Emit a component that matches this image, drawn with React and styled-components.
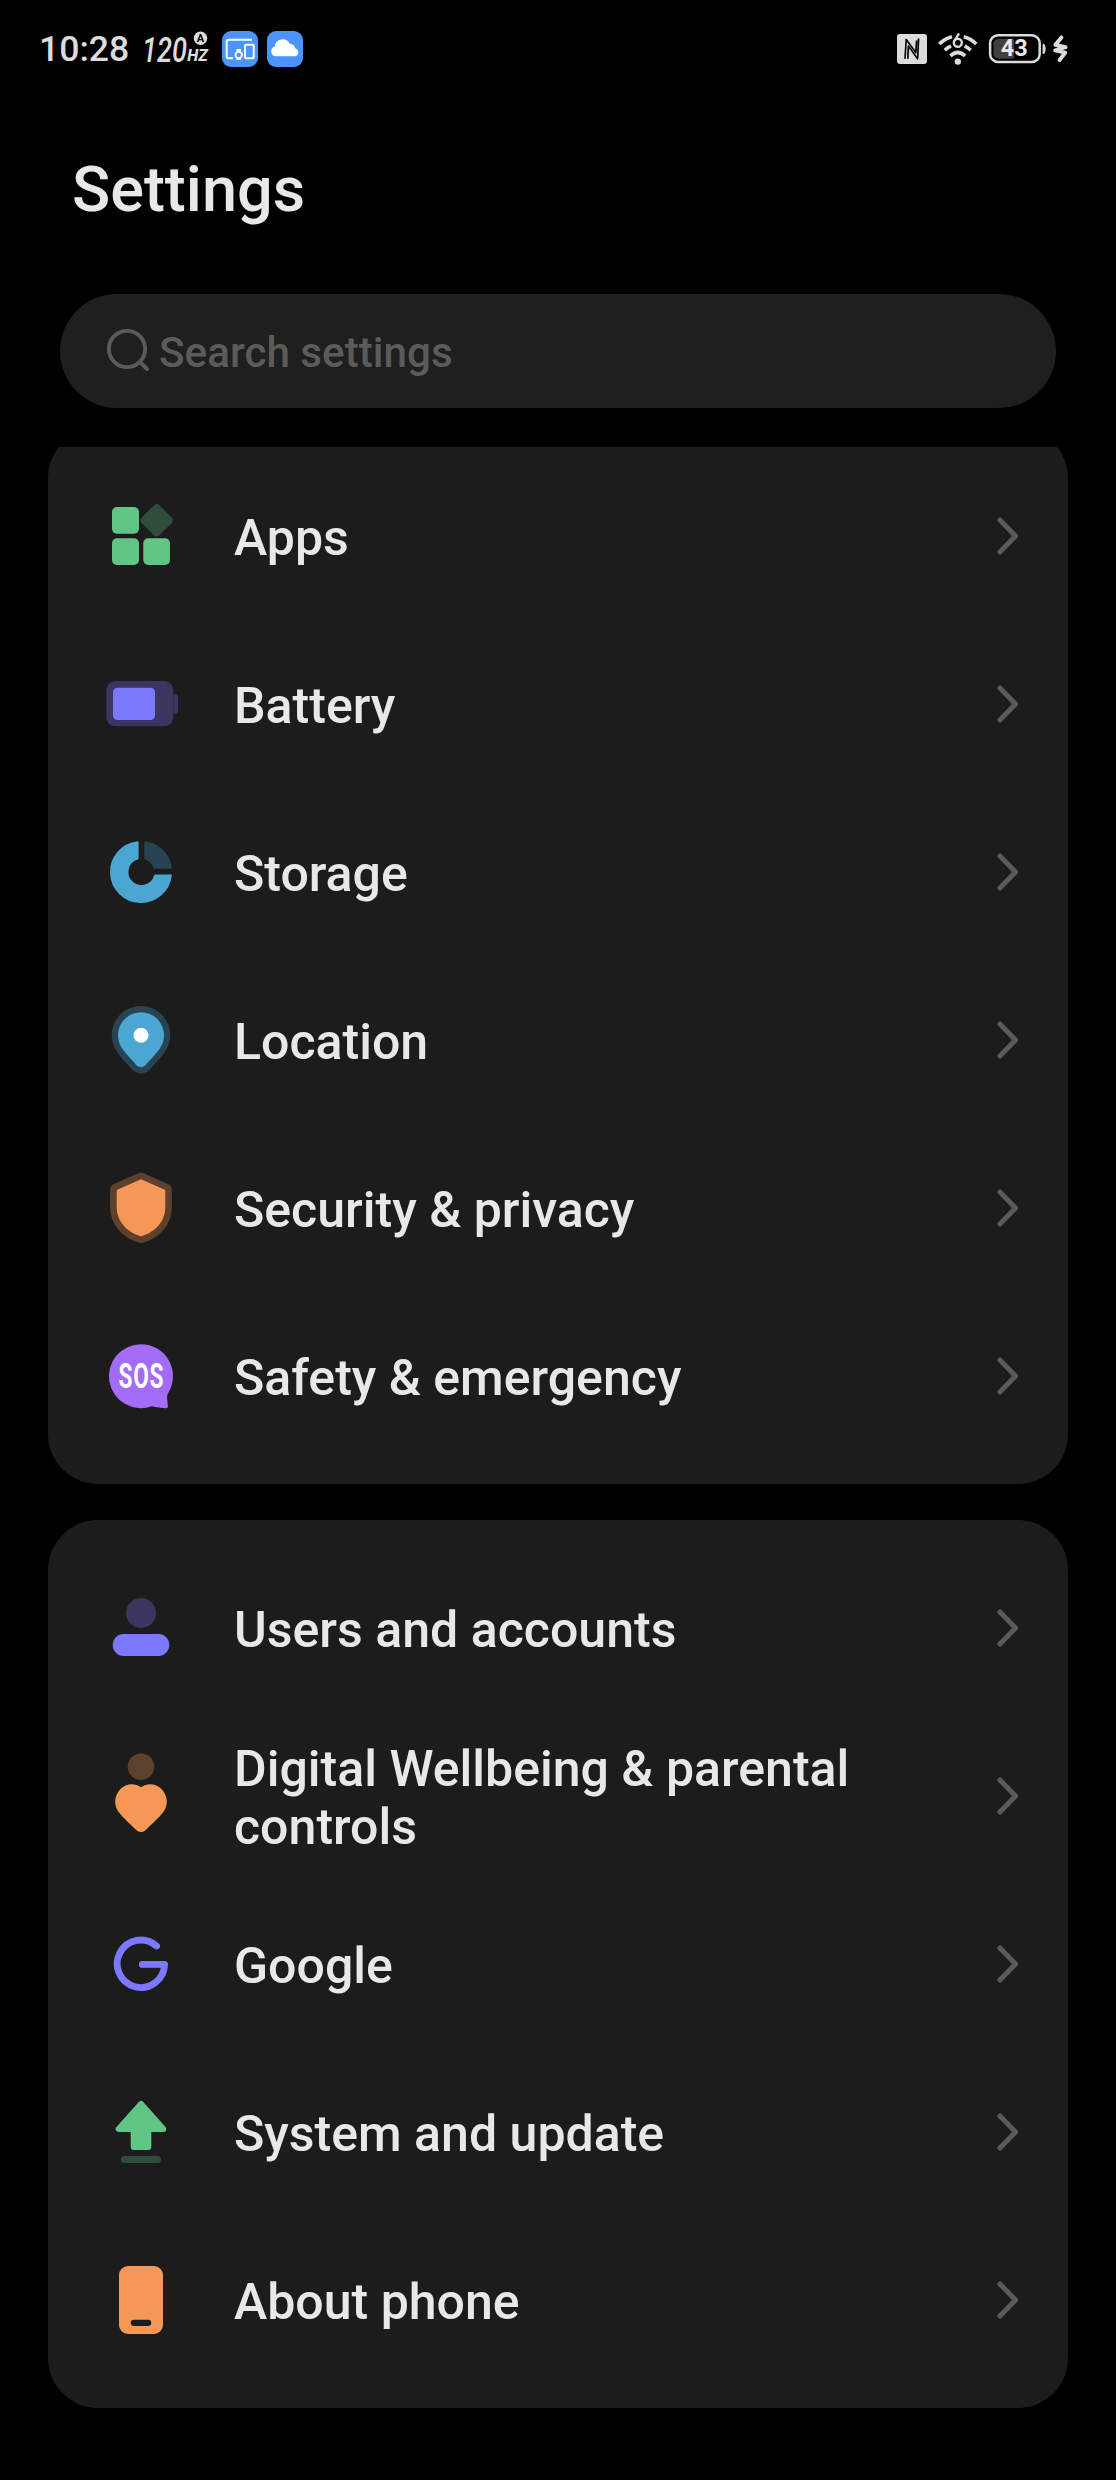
import React from "react";
import styled, { createGlobalStyle } from "styled-components";

const GlobalStyle = createGlobalStyle`
  * {
    box-sizing: border-box;
  }
  body {
    margin: 0;
    background: #000;
    font-family: Roboto, "Liberation Sans", sans-serif;
  }
`;

const Screen = styled.div`
  display: flex;
  flex-direction: column;
  width: 1116px;
  height: 2480px;
  background: #000;
  color: #e8e8e8;
  overflow: hidden;
`;

const StatusBar = styled.header`
  display: flex;
  align-items: center;
  justify-content: space-between;
  height: 98px;
  padding: 0 48px 0 39px;
`;

const StatusGroup = styled.div`
  display: flex;
  align-items: center;
  gap: ${({ $gap }) => $gap}px;
`;

const Clock = styled.span`
  width: 91px;
  margin-right: 5px;
  font-size: 35.6px;
  line-height: 41px;
  font-weight: 500;
  color: #dcdcdc;
  white-space: nowrap;
`;

const StatusSvg = styled.svg`
  display: block;
  flex: none;
  overflow: visible;
`;

const ChargingGroup = styled.div`
  display: flex;
  align-items: center;
  gap: 7px;
`;

const Title = styled.h1`
  margin: 0;
  padding: 55px 72px 0;
  height: 196px;
  font-size: 63px;
  line-height: 74px;
  font-weight: 500;
`;

const SearchBar = styled.div`
  display: flex;
  align-items: center;
  flex: none;
  height: 114px;
  margin: 0 60px;
  padding-left: 44px;
  border-radius: 57px;
  background: #1f1f1f;
  color: #5b5b5b;
`;

const SearchText = styled.span`
  padding: 2px 0 0 8px;
  font-size: 42.2px;
  font-weight: 500;
`;

/* the list is scrolled a little under the search bar */
const ListViewport = styled.main`
  flex: 1;
  min-height: 0;
  margin-top: 39px;
  padding: 0 48px;
  overflow: hidden;
`;

const List = styled.div`
  display: flex;
  flex-direction: column;
  gap: 36px;
  margin-top: -19px;
`;

const Card = styled.section`
  padding: 24px 48px 24px 57px;
  border-radius: 50px;
  background: #1c1c1c;
`;

const Row = styled.div`
  display: flex;
  align-items: center;
  height: 168px;
`;

const RowIcon = styled.svg`
  flex: none;
  width: 72px;
  height: 72px;
  overflow: visible;
`;

const Label = styled.span`
  flex: 1;
  padding: 4px 100px 0 57px;
  font-size: 50.05px;
  line-height: 58px;
  font-weight: 500;
`;

const Chevron = styled.svg`
  flex: none;
  width: 24px;
  height: 40px;
`;

const colors = {
  green: "#61c685",
  greenDim: "#2f4d3a",
  purple: "#7c78ff",
  purpleDim: "#39365f",
  blue: "#4ba6d2",
  blueDim: "#284452",
  orange: "#f59857",
  orangeDim: "#5c412d",
  violet: "#a46bf7",
};

const AppsIcon = () => (
  <RowIcon viewBox="0 0 72 72">
    <g fill={colors.green}>
      <rect x="7" y="7" width="27" height="26.7" rx="5" />
      <rect x="7" y="38.3" width="27" height="26.7" rx="5" />
      <rect x="38.3" y="38.3" width="26.7" height="26.7" rx="5" />
    </g>
    <rect
      x="39.2"
      y="7.8"
      width="25"
      height="25"
      rx="4"
      fill={colors.greenDim}
      transform="rotate(45 51.7 20.3)"
    />
  </RowIcon>
);

const BatteryIcon = () => (
  <RowIcon viewBox="0 0 72 72">
    <rect x="1.3" y="13" width="67" height="45.3" rx="9" fill={colors.purpleDim} />
    <path d="M68.3 26.3H70a3 3 0 0 1 3 3v13.4a3 3 0 0 1-3 3h-1.7z" fill={colors.purpleDim} />
    <rect x="8" y="19.7" width="42" height="32.3" rx="4.5" fill={colors.purple} />
  </RowIcon>
);

const StorageIcon = () => (
  <RowIcon viewBox="0 0 72 72">
    <path
      d="M32.6 6.2A30 30 0 1 0 65.8 39.4H50A14 14 0 1 1 32.6 22.5Z"
      fill={colors.blue}
      stroke={colors.blue}
      strokeWidth="2"
      strokeLinejoin="round"
    />
    <path
      d="M40.3 6.2A30 30 0 0 1 65.8 31.8H49.4A14 14 0 0 0 40.3 22.6Z"
      fill={colors.blueDim}
      stroke={colors.blueDim}
      strokeWidth="2"
      strokeLinejoin="round"
    />
  </RowIcon>
);

const pinPath =
  "M36 8.3C48.7 8.3 59 18.6 59 31.3C59 39.5 55 45 50.2 50.4L40.3 61.2Q36 65.3 31.7 61.2L21.8 50.4C17 45 13 39.5 13 31.3C13 18.6 23.3 8.3 36 8.3Z";

const LocationIcon = () => (
  <RowIcon viewBox="0 0 72 72">
    <path d={pinPath} fill={colors.blueDim} stroke={colors.blueDim} strokeWidth="12.6" />
    <path d={pinPath} fill={colors.blue} />
    <circle cx="36" cy="31.2" r="7.5" fill="#fff" />
  </RowIcon>
);

const shieldPath =
  "M36 7.3L60.3 18V35C60.3 50 49.5 60.5 36 64.3C22.5 60.5 11.7 50 11.7 35V18Z";

const SecurityIcon = () => (
  <RowIcon viewBox="0 0 72 72">
    <path
      d={shieldPath}
      fill={colors.orangeDim}
      stroke={colors.orangeDim}
      strokeWidth="13.2"
      strokeLinejoin="round"
    />
    <path d={shieldPath} fill={colors.orange} />
  </RowIcon>
);

const SafetyIcon = () => (
  <RowIcon viewBox="0 0 72 72">
    <path
      d="M36 4.2A32 32 0 0 1 63.2 53Q61.4 56 62.2 59.5L62.9 66Q63.1 68.4 60.5 68.3L54 67.6Q50 67.2 46.8 66.3A32 32 0 1 1 36 4.2Z"
      fill={colors.violet}
    />
    <text
      x="13.6"
      y="48.1"
      fill="#fff"
      fontSize="35"
      fontWeight="700"
      letterSpacing="1"
      textLength="45.5"
      lengthAdjust="spacingAndGlyphs"
    >
      SOS
    </text>
  </RowIcon>
);

const UsersIcon = () => (
  <RowIcon viewBox="0 0 72 72">
    <circle cx="36" cy="21" r="15" fill={colors.purpleDim} />
    <rect x="7.7" y="42" width="56.6" height="22" rx="11" fill={colors.purple} />
  </RowIcon>
);

const WellbeingIcon = () => (
  <RowIcon viewBox="0 0 72 72">
    <circle cx="36" cy="6.7" r="13.3" fill={colors.orangeDim} />
    <path
      d="M36 27.3C30 22.8 22 23.2 16.5 28C9.5 34.5 7.8 44.5 14 52.5C18.5 58 26.5 65.5 31.8 70.4Q36 73.6 40.2 70.4C45.5 65.5 53.5 58 58 52.5C64.2 44.5 62.5 34.5 55.5 28C50 23.2 42 22.8 36 27.3Z"
      fill={colors.orange}
    />
  </RowIcon>
);

const GoogleIcon = () => (
  <RowIcon viewBox="0 0 72 72">
    <path
      d="M51.6 18A23.7 23.7 0 1 0 59.6 36.4H37.3"
      fill="none"
      stroke={colors.purple}
      strokeWidth="6.8"
      strokeLinecap="round"
      strokeLinejoin="round"
    />
  </RowIcon>
);

const UpdateIcon = () => (
  <RowIcon viewBox="0 0 72 72">
    <path
      d="M36 8L13.7 33H28.7V51H43.3V33H58.3Z"
      fill={colors.green}
      stroke={colors.green}
      strokeWidth="6"
      strokeLinejoin="round"
    />
    <rect x="16" y="60" width="40" height="7" rx="3.5" fill={colors.greenDim} />
  </RowIcon>
);

const PhoneIcon = () => (
  <RowIcon viewBox="0 0 72 72">
    <rect x="14" y="2" width="44" height="68" rx="9" fill={colors.orange} />
    <rect x="25.7" y="55.7" width="20.6" height="6.3" rx="3.15" fill="#1c1c1c" />
  </RowIcon>
);

const RefreshRate = () => (
  <StatusSvg width="69" height="36" viewBox="0 0 69 36" fill="#dcdcdc" fontStyle="italic">
    <text
      x="-2"
      y="30.6"
      fontSize="35"
      fontWeight="500"
      textLength="45"
      lengthAdjust="spacingAndGlyphs"
    >
      120
    </text>
    <text
      x="43.3"
      y="30"
      fontSize="17"
      fontWeight="800"
      textLength="20.5"
      lengthAdjust="spacingAndGlyphs"
    >
      HZ
    </text>
    <circle cx="56.5" cy="7.3" r="6.7" />
    <text x="56.5" y="11.2" fill="#000" fontSize="11" fontWeight="700" fontStyle="normal" textAnchor="middle">
      A
    </text>
  </StatusSvg>
);

const DevicesBadge = () => (
  <StatusSvg width="36" height="36" viewBox="0 0 36 36">
    <rect width="36" height="36" rx="9" fill="#4a94fb" />
    <g fill="none" stroke="#fff" strokeWidth="2">
      <path d="M30 8.7H6.5Q4.7 8.7 4.7 10.5V25.5Q4.7 27.3 6.5 27.3H11" />
      <rect x="23" y="13.7" width="8.7" height="13.6" rx="0.8" />
      <circle cx="16.7" cy="24" r="3.2" />
    </g>
    <path d="M14.4 18H19V20.5H14.4zM14.4 27H19V29H14.4z" fill="#fff" />
  </StatusSvg>
);

const CloudBadge = () => (
  <StatusSvg width="36" height="36" viewBox="0 0 36 36">
    <rect width="36" height="36" rx="9" fill="#4a94fb" />
    <path
      d="M8.6 25.2A4.9 4.9 0 0 1 7.8 15.6A7.9 7.9 0 0 1 22.8 12.8A6 6 0 0 1 28.3 17.6A3.9 3.9 0 0 1 28.2 25.2Z"
      fill="#fff"
    />
  </StatusSvg>
);

const NfcIcon = () => (
  <StatusSvg width="30" height="30" viewBox="0 0 30 30">
    <rect width="30" height="30" rx="3" fill="#dcdcdc" />
    <path
      d="M8 24.8L9.2 5.5L18.8 18.5L19.6 6.5M10.8 24.8L11.4 12L20.6 24.8L21.6 4.5"
      fill="none"
      stroke="#000"
      strokeWidth="1.7"
      strokeLinejoin="round"
    />
  </StatusSvg>
);

const WifiIcon = () => (
  <StatusSvg width="40" height="32" viewBox="0 0 40 32">
    <g fill="none" stroke="#dcdcdc" strokeWidth="3.6">
      <path d="M1.3 11Q7 5.5 14 3.8M38.2 11Q32.5 5.5 25.8 3.8" />
      <path d="M6.8 17.2Q9.6 14.6 13 13.2M32.7 17.2Q29.9 14.6 26.5 13.2" />
      <path d="M12.4 22.8Q19.8 16.2 27.1 22.8" />
      <circle cx="19.8" cy="9.8" r="4" strokeWidth="2.4" />
      <path d="M16.4 8L21 0.4" strokeWidth="2.4" />
    </g>
    <circle cx="19.8" cy="28.6" r="3.2" fill="#dcdcdc" />
  </StatusSvg>
);

const BatteryStatus = () => (
  <StatusSvg width="57" height="30" viewBox="0 0 57 30">
    <rect x="1.1" y="1.3" width="49.6" height="26.7" rx="8" fill="none" stroke="#dcdcdc" strokeWidth="2.5" />
    <path d="M25 4.7H9.5A5 5 0 0 0 4.5 9.7V19.7A5 5 0 0 0 9.5 24.7H25Z" fill="#404040" />
    <path d="M53.6 9.7H54.6Q56.6 10.8 56.6 14.8Q56.6 18.8 54.6 20H53.6Z" fill="#dcdcdc" />
    <text x="25.3" y="22.4" fill="#e8e8e8" fontSize="23.5" fontWeight="700" textAnchor="middle">
      43
    </text>
  </StatusSvg>
);

const BoltIcon = () => (
  <StatusSvg width="15" height="28" viewBox="0 0 15 28">
    <path
      d="M8.4 2.4L2.4 9.8L12.6 12.2L2.2 15.4L12.2 17.6L6.6 25"
      fill="none"
      stroke="#dcdcdc"
      strokeWidth="3.9"
      strokeLinecap="round"
      strokeLinejoin="round"
    />
  </StatusSvg>
);

const SearchIcon = () => (
  <StatusSvg width="47" height="46" viewBox="0 0 47 46">
    <g fill="none" stroke="#5b5b5b" strokeWidth="3.9" strokeLinecap="round">
      <circle cx="23" cy="21" r="18.1" />
      <path d="M36 34L43 41" />
    </g>
  </StatusSvg>
);

const groups = [
  [
    { label: "Apps", Icon: AppsIcon },
    { label: "Battery", Icon: BatteryIcon },
    { label: "Storage", Icon: StorageIcon },
    { label: "Location", Icon: LocationIcon },
    { label: "Security & privacy", Icon: SecurityIcon },
    { label: "Safety & emergency", Icon: SafetyIcon },
  ],
  [
    { label: "Users and accounts", Icon: UsersIcon },
    { label: "Digital Wellbeing & parental controls", Icon: WellbeingIcon },
    { label: "Google", Icon: GoogleIcon },
    { label: "System and update", Icon: UpdateIcon },
    { label: "About phone", Icon: PhoneIcon },
  ],
];

const SettingsRow = ({ label, Icon }) => (
  <Row>
    <Icon />
    <Label>{label}</Label>
    <Chevron viewBox="0 0 24 40">
      <path
        d="M4 4L19.5 20L4 36"
        fill="none"
        stroke="#5a5a5a"
        strokeWidth="5"
        strokeLinecap="round"
        strokeLinejoin="round"
      />
    </Chevron>
  </Row>
);

const App = () => {
  return (
    <>
      <GlobalStyle />
      <Screen>
        <StatusBar>
          <StatusGroup $gap={9}>
            <Clock>10:28</Clock>
            <RefreshRate />
            <DevicesBadge />
            <CloudBadge />
          </StatusGroup>
          <StatusGroup $gap={11}>
            <NfcIcon />
            <WifiIcon />
            <ChargingGroup>
              <BatteryStatus />
              <BoltIcon />
            </ChargingGroup>
          </StatusGroup>
        </StatusBar>
        <Title>Settings</Title>
        <SearchBar>
          <SearchIcon />
          <SearchText>Search settings</SearchText>
        </SearchBar>
        <ListViewport>
          <List>
            {groups.map((rows, i) => (
              <Card key={i}>
                {rows.map((row) => (
                  <SettingsRow key={row.label} {...row} />
                ))}
              </Card>
            ))}
          </List>
        </ListViewport>
      </Screen>
    </>
  );
};

export default App;
